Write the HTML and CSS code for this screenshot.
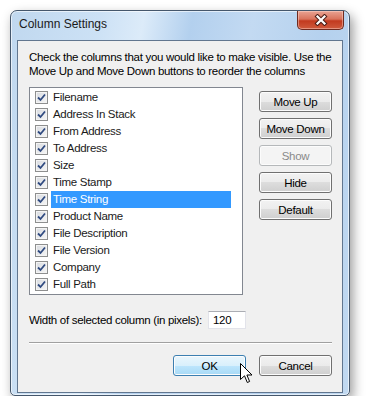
FILE: index.html
```html
<!DOCTYPE html>
<html>
<head>
    <title>Column Settings</title>
    <meta charset="utf-8" />
    <link rel="stylesheet" href="styles.css">
</head>
<body>
    <div class="window">
        <div class="titlebar">
            <span class="title">Column Settings</span>
            <div class="close">
                <svg width="14" height="12" viewBox="0 0 14 12">
                    <path d="M3.5 2.5 L10.5 9.5 M10.5 2.5 L3.5 9.5" stroke="#4b1d16" stroke-width="4.2" stroke-linecap="square" fill="none"/>
                    <path d="M3.5 2.5 L10.5 9.5 M10.5 2.5 L3.5 9.5" stroke="#ffffff" stroke-width="2.2" stroke-linecap="square" fill="none"/>
                </svg>
            </div>
        </div>
        <div class="client">
            <p class="intro">Check the columns that you would like to make visible. Use the<br>Move Up and Move Down buttons to reorder the columns</p>
            <div class="main">
                <ul class="list">
                    <li class="item"><span class="cb"><svg viewBox="0 0 9 9"><path d="M1 4.5 L3.5 7 L8 1.5"/></svg></span><span class="label">Filename</span></li>
                    <li class="item"><span class="cb"><svg viewBox="0 0 9 9"><path d="M1 4.5 L3.5 7 L8 1.5"/></svg></span><span class="label">Address In Stack</span></li>
                    <li class="item"><span class="cb"><svg viewBox="0 0 9 9"><path d="M1 4.5 L3.5 7 L8 1.5"/></svg></span><span class="label">From Address</span></li>
                    <li class="item"><span class="cb"><svg viewBox="0 0 9 9"><path d="M1 4.5 L3.5 7 L8 1.5"/></svg></span><span class="label">To Address</span></li>
                    <li class="item"><span class="cb"><svg viewBox="0 0 9 9"><path d="M1 4.5 L3.5 7 L8 1.5"/></svg></span><span class="label">Size</span></li>
                    <li class="item"><span class="cb"><svg viewBox="0 0 9 9"><path d="M1 4.5 L3.5 7 L8 1.5"/></svg></span><span class="label">Time Stamp</span></li>
                    <li class="item selected"><span class="cb"><svg viewBox="0 0 9 9"><path d="M1 4.5 L3.5 7 L8 1.5"/></svg></span><span class="label">Time String</span></li>
                    <li class="item"><span class="cb"><svg viewBox="0 0 9 9"><path d="M1 4.5 L3.5 7 L8 1.5"/></svg></span><span class="label">Product Name</span></li>
                    <li class="item"><span class="cb"><svg viewBox="0 0 9 9"><path d="M1 4.5 L3.5 7 L8 1.5"/></svg></span><span class="label">File Description</span></li>
                    <li class="item"><span class="cb"><svg viewBox="0 0 9 9"><path d="M1 4.5 L3.5 7 L8 1.5"/></svg></span><span class="label">File Version</span></li>
                    <li class="item"><span class="cb"><svg viewBox="0 0 9 9"><path d="M1 4.5 L3.5 7 L8 1.5"/></svg></span><span class="label">Company</span></li>
                    <li class="item"><span class="cb"><svg viewBox="0 0 9 9"><path d="M1 4.5 L3.5 7 L8 1.5"/></svg></span><span class="label">Full Path</span></li>
                </ul>
                <div class="side">
                    <button class="btn">Move Up</button>
                    <button class="btn">Move Down</button>
                    <button class="btn" disabled>Show</button>
                    <button class="btn">Hide</button>
                    <button class="btn">Default</button>
                </div>
            </div>
            <div class="width-row">
                <span class="width-label">Width of selected column (in pixels):</span>
                <span class="field">120</span>
            </div>
            <div class="sep"></div>
            <div class="footer">
                <button class="btn hot">OK</button>
                <button class="btn">Cancel</button>
                <svg class="cursor" width="13" height="21" viewBox="0 0 13 21">
                    <path d="M0.5 0.5 L0.5 16.5 L4.5 12.8 L7.3 19.5 L9.6 18.5 L6.9 12 L12 12 Z" fill="#ffffff" stroke="#000000" stroke-width="1" stroke-linejoin="miter"/>
                </svg>
            </div>
        </div>
    </div>
</body>
</html>
```

FILE: styles.css
```css
body {
    margin: 0;
    background-color: #ffffff;
    font-family: "Liberation Sans", Arial, sans-serif;
    font-size: 11.5px;
    letter-spacing: -0.3px;
    color: #000;
}
.window {
    box-sizing: border-box;
    width: 340px;
    height: 386px;
    margin: 10px 0 0 10px;
    padding: 0 6px 2px 6px;
    border: 1px solid #45576c;
    border-radius: 7px 7px 5px 5px;
    background: linear-gradient(100deg, #c0d8ef 0%, #cce1f5 22%, #dcebf9 33%, #b3d0ee 45%, #c3daf2 60%, #b5d1ee 78%, #c1d9f1 100%);
    box-shadow: 3px 5px 12px rgba(0, 0, 0, 0.4), inset 0 0 0 1px rgba(255, 255, 255, 0.6);
    display: flex;
    flex-direction: column;
}
.titlebar {
    height: 29px;
    flex-shrink: 0;
    display: flex;
    justify-content: space-between;
    align-items: flex-start;
}
.title {
    margin: 6px 0 0 2px;
    line-height: 14px;
    font-size: 12px;
    letter-spacing: 0;
    color: #1a1a1a;
}
.close {
    width: 47px;
    height: 19px;
    box-sizing: border-box;
    margin-right: -1px;
    border: 1px solid #6e2a1f;
    border-top: none;
    border-radius: 0 0 5px 5px;
    background: linear-gradient(#e9a393 0%, #d9735c 45%, #c23a1f 55%, #cf5a3d 100%);
    box-shadow: inset 0 0 0 1px rgba(255, 220, 210, 0.45);
    display: flex;
    justify-content: center;
    align-items: center;
}
.client {
    flex: 1;
    background-color: #f0f0f0;
    border: 1px solid #61768f;
    padding: 9px 10px 0 11px;
    display: flex;
    flex-direction: column;
}
.intro {
    margin: 0;
    line-height: 14px;
    white-space: nowrap;
}
.main {
    display: flex;
    gap: 16px;
    margin-top: 9px;
}
.list {
    box-sizing: border-box;
    width: 214px;
    height: 208px;
    margin: 0;
    padding: 1px 0 0 5px;
    list-style: none;
    background-color: #fff;
    border: 1px solid #828790;
}
.item {
    height: 17px;
    display: flex;
    align-items: center;
}
.cb {
    box-sizing: border-box;
    width: 13px;
    height: 13px;
    border: 1px solid #8e8f8f;
    background: linear-gradient(135deg, #d8dbe0 0%, #f6f6f6 100%);
    box-shadow: inset 0 0 0 1px #f4f4f4;
    display: flex;
    justify-content: center;
    align-items: center;
}
.cb svg {
    width: 9px;
    height: 9px;
}
.cb path {
    fill: none;
    stroke: #2f4a80;
    stroke-width: 1.8;
}
.label {
    box-sizing: border-box;
    width: 180px;
    margin-left: 3px;
    padding: 0 2px;
    line-height: 17px;
    color: #1a1a1a;
}
.selected .label {
    background-color: #3399ff;
    color: #fff;
}
.side {
    margin-top: 4px;
    display: flex;
    flex-direction: column;
    gap: 6px;
}
.btn {
    box-sizing: border-box;
    width: 73px;
    height: 21px;
    padding: 0;
    font-family: "Liberation Sans", Arial, sans-serif;
    font-size: 11.5px;
    letter-spacing: -0.3px;
    color: #000;
    border: 1px solid #707070;
    border-radius: 3px;
    background: linear-gradient(#f2f2f2 0%, #ebebeb 50%, #dddddd 50%, #cfcfcf 100%);
    box-shadow: inset 0 0 0 1px #fcfcfc;
}
.btn:disabled {
    color: #8a8a8a;
    border-color: #b5b8ba;
    background: #f4f4f4;
}
.btn.hot {
    border-color: #3c7fb1;
    background: linear-gradient(#eaf6fd 0%, #d9f0fc 50%, #bee6fd 50%, #a7d9f5 100%);
}
.width-row {
    margin-top: 16px;
    height: 18px;
    display: flex;
    align-items: center;
    gap: 6px;
}
.field {
    box-sizing: border-box;
    width: 38px;
    height: 18px;
    padding: 0 4px;
    line-height: 16px;
    background-color: #fff;
    border: 1px solid #e2e3ea;
    border-top-color: #abadb3;
}
.sep {
    margin-top: 13px;
    height: 1px;
    background-color: #a0a0a0;
    border-bottom: 1px solid #fff;
}
.footer {
    position: relative;
    margin-top: 11px;
    display: flex;
    justify-content: flex-end;
    gap: 13px;
}
.cursor {
    position: absolute;
    left: 211px;
    top: 8px;
}
```
